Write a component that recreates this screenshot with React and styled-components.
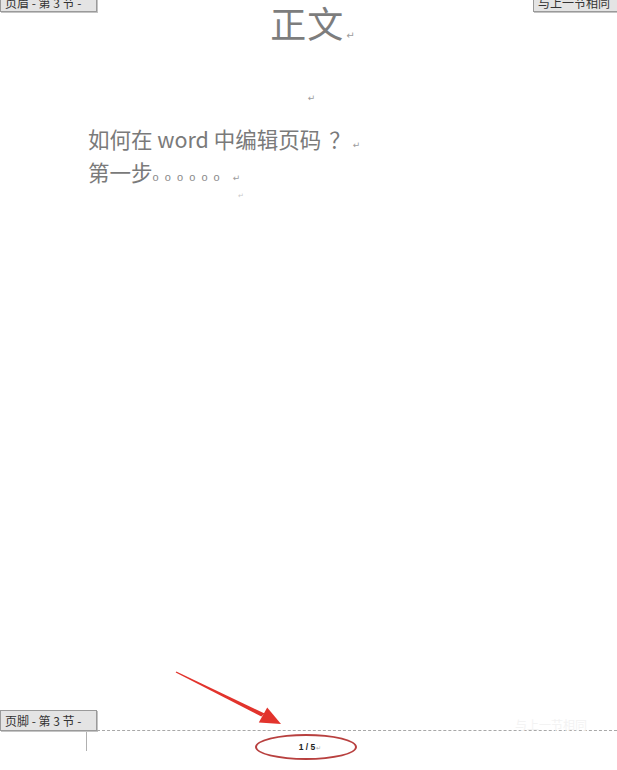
import React from 'react'
import styled, { createGlobalStyle } from 'styled-components'

const GlobalStyle = createGlobalStyle`
    html, body {
        margin: 0;
        padding: 0;
        background: #ffffff;
        overflow: hidden;
    }
    body {
        font-family: "Noto Sans CJK SC", "Noto Sans", sans-serif;
    }
`

const App = () => (
    <Page>
        <GlobalStyle />
        <HeaderRow>
            <Tab>页眉 - 第 3 节 -</Tab>
            <Title>正文<Mark big>↵</Mark></Title>
            <Tab right>与上一节相同</Tab>
        </HeaderRow>

        <EmptyPara><Mark>↵</Mark></EmptyPara>

        <Body>
            <Line>如何在 word 中编辑页码<Quest>？</Quest><Mark>↵</Mark></Line>
            <Line>第一步<Dots>oooooo</Dots> <Mark>↵</Mark></Line>
            <Stray>↵</Stray>
        </Body>

        <Footer>
            <FooterTabRow>
                <Tab footer>页脚 - 第 3 节 -</Tab>
                <Dotted>
                    <Ghost>与上一节相同</Ghost>
                </Dotted>
            </FooterTabRow>
            <FooterBody>
                <CropMark />
                <Circled>1 / 5<Tiny>↵</Tiny></Circled>
            </FooterBody>
        </Footer>

        <Arrow viewBox="0 0 617 770" width="617" height="770">
            <path d="M175.7,672.6 L176.3,671.4 L264.6,713.5 L261.4,716.5 Z" fill="#e2332c" />
            <polygon points="281,724 258.8,722.6 267.2,707.4" fill="#e2332c" />
        </Arrow>
    </Page>
)

const Page = styled.div`
    position: relative;
    width: 617px;
    height: 770px;
    display: flex;
    flex-direction: column;
    color: #7c7c7c;
    overflow: hidden;
`

const HeaderRow = styled.div`
    display: grid;
    grid-template-columns: 1fr auto 1fr;
    align-items: start;
`

const Tab = styled.div`
    box-sizing: border-box;
    height: ${p => p.footer ? '21px' : '20px'};
    width: ${p => p.right ? '88px' : '97px'};
    margin-top: ${p => p.footer ? '0' : '-8px'};
    justify-self: ${p => p.right ? 'end' : 'start'};
    margin-right: ${p => p.right ? '-4px' : '0'};
    padding: 0 0 0 4px;
    background: #e4e4e4;
    border: 1px solid #9a9a9a;
    box-shadow: 1px 1px 0 #c4c4c4;
    font-size: 12px;
    line-height: 19px;
    color: #333;
    white-space: nowrap;
    overflow: hidden;
    flex-shrink: 0;
`

const Title = styled.div`
    padding: 0 0 0 8px;
    font-size: 36px;
    line-height: 44px;
    color: #7d7d7d;
    letter-spacing: 1px;
    white-space: nowrap;
`

const Mark = styled.span`
    font-family: "DejaVu Sans", sans-serif;
    font-size: ${p => p.big ? '10px' : '9px'};
    line-height: 1;
    color: #9c9c9c;
    margin-left: 2px;
    letter-spacing: 0;
    vertical-align: ${p => p.big ? '-1px' : 'baseline'};
`

const EmptyPara = styled.div`
    margin-top: 43px;
    text-align: center;
    line-height: 14px;
    padding-left: 4px;
`

const Body = styled.div`
    padding: 19px 0 0 88px;
    display: flex;
    flex-direction: column;
    align-items: flex-start;
`

const Line = styled.div`
    font-size: 21.5px;
    line-height: 33px;
    color: #7a7a7a;
    white-space: nowrap;
`

const Quest = styled.span`
    margin-left: 8px;
`

const Dots = styled.span`
    font-family: "Liberation Sans", sans-serif;
    font-size: 11px;
    line-height: 1;
    letter-spacing: 6.1px;
    color: #8a8a8a;
`

const Stray = styled.div`
    margin: 3px 0 0 150px;
    font-family: "DejaVu Sans", sans-serif;
    font-size: 7px;
    line-height: 10px;
    color: #c8c8c8;
`

const Footer = styled.div`
    margin-top: auto;
    padding-bottom: 10px;
`

const FooterTabRow = styled.div`
    display: flex;
    align-items: flex-end;
`

const Dotted = styled.div`
    flex: 1;
    height: 0;
    border-top: 1px dashed #a8a8a8;
    display: flex;
    justify-content: flex-end;
`

const Ghost = styled.span`
    margin: -12px 30px 0 0;
    font-size: 12px;
    line-height: 12px;
    color: #f3f3f3;
`

const FooterBody = styled.div`
    display: flex;
    align-items: flex-start;
`

const CropMark = styled.div`
    width: 1px;
    height: 19px;
    margin: 1px 0 0 86px;
    background: #b0b0b0;
`

const Circled = styled.div`
    box-sizing: border-box;
    margin: 3px 0 0 168px;
    width: 102px;
    height: 26px;
    border: 2.5px solid #b8403f;
    border-radius: 50%;
    display: flex;
    align-items: center;
    justify-content: center;
    font-family: "Liberation Sans", sans-serif;
    font-weight: bold;
    font-size: 8.5px;
    color: #222;
    padding-left: 8px;
`

const Tiny = styled.span`
    font-weight: normal;
    font-size: 6px;
    color: #aaa;
    margin-left: 1px;
`

const Arrow = styled.svg`
    position: absolute;
    left: 0;
    top: 0;
    pointer-events: none;
`

export default App
